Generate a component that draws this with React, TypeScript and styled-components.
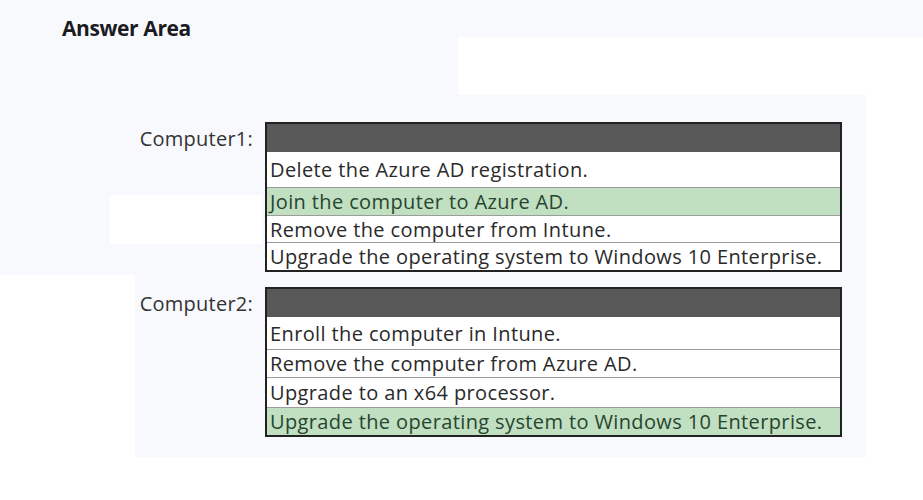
import React from "react";
import styled, { createGlobalStyle } from "styled-components";

const Global = createGlobalStyle`
  html, body { margin: 0; padding: 0; background: #ffffff; }
  body { font-family: "Open Sans", "Noto Sans", sans-serif; }
`;

const white = "linear-gradient(#fff, #fff)";

/* faint scan-like patches of the original page background */
const Page = styled.div`
  width: 923px;
  height: 500px;
  box-sizing: border-box;
  padding: 13px 0 0 62px;
  background-color: #f8f9fd;
  background-image: ${white}, ${white}, ${white}, ${white}, ${white};
  background-repeat: no-repeat;
  background-position: 458px 37px, 866px 37px, 110px 195px, 0 275px, 0 457px;
  background-size: 410px 58px, 57px 463px, 152px 49px, 135px 225px, 923px 43px;
`;

const Title = styled.h1`
  margin: 0;
  font-family: "Open Sans", sans-serif;
  font-weight: 700;
  font-size: 21px;
  line-height: 30px;
  color: #1b1b1f;
  letter-spacing: -0.4px;
`;

const Questions = styled.div`
  display: grid;
  grid-template-columns: 191px 577px;
  column-gap: 12px;
  row-gap: 15px;
  margin-top: 79px;
`;

const Label = styled.div`
  text-align: right;
  font-size: 20px;
  line-height: 26px;
  padding-top: 4px;
  color: #333;
  letter-spacing: 0.25px;
`;

const Box = styled.div`
  border: 2px solid #222;
  background: #fff;
  display: flex;
  flex-direction: column;
`;

const Header = styled.div`
  height: 28px;
  background: #595959;
`;

const Option = styled.div<{ $h: number; $correct?: boolean; $first?: boolean }>`
  height: ${(p) => p.$h}px;
  box-sizing: border-box;
  border-top: ${(p) => (p.$first ? "none" : "1px solid #9c9c9c")};
  background: ${(p) => (p.$correct ? "#c1dfc1" : "#ffffff")};
  color: ${(p) => (p.$correct ? "#27452f" : "#2a2a2a")};
  display: flex;
  align-items: center;
  padding-left: 3px;
  font-size: 20px;
  letter-spacing: 0.38px;
  white-space: nowrap;
`;

type Opt = { text: string; h: number; correct?: boolean };

const questions: { label: string; options: Opt[] }[] = [
  {
    label: "Computer1:",
    options: [
      { text: "Delete the Azure AD registration.", h: 35 },
      { text: "Join the computer to Azure AD.", h: 28, correct: true },
      { text: "Remove the computer from Intune.", h: 27 },
      { text: "Upgrade the operating system to Windows 10 Enterprise.", h: 28 },
    ],
  },
  {
    label: "Computer2:",
    options: [
      { text: "Enroll the computer in Intune.", h: 32 },
      { text: "Remove the computer from Azure AD.", h: 28 },
      { text: "Upgrade to an x64 processor.", h: 30 },
      { text: "Upgrade the operating system to Windows 10 Enterprise.", h: 28, correct: true },
    ],
  },
];

export default function App() {
  return (
    <>
      <Global />
      <Page>
        <Title>Answer Area</Title>
        <Questions>
          {questions.map((q) => (
            <React.Fragment key={q.label}>
              <Label>{q.label}</Label>
              <Box>
                <Header />
                {q.options.map((o, i) => (
                  <Option key={i} $h={o.h} $correct={o.correct} $first={i === 0}>
                    {o.text}
                  </Option>
                ))}
              </Box>
            </React.Fragment>
          ))}
        </Questions>
      </Page>
    </>
  );
}
